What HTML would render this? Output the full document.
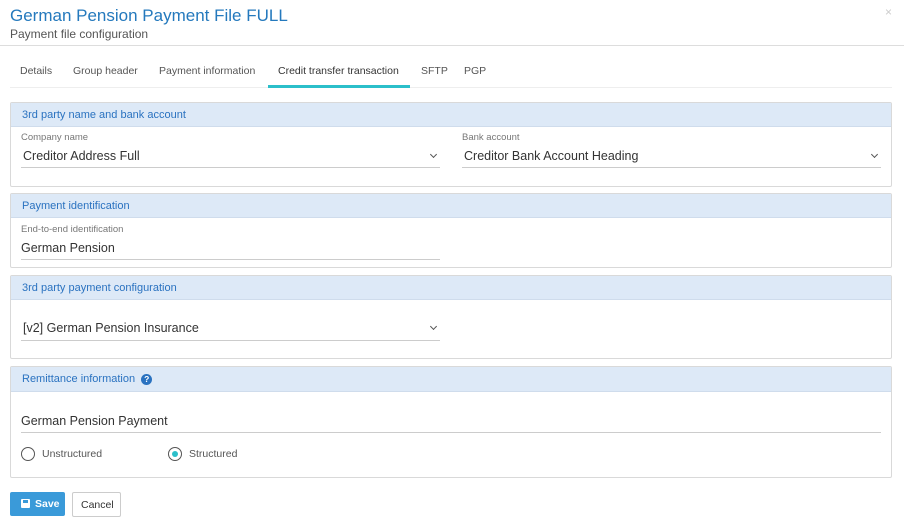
<!DOCTYPE html>
<html><head><meta charset="utf-8"><style>
*{margin:0;padding:0;box-sizing:border-box}
body{width:904px;height:528px;background:#fff;font-family:"Liberation Sans",sans-serif;position:relative;overflow:hidden;color:#333}
.a{position:absolute;white-space:nowrap}
.title{left:10px;top:6px;font-size:17px;color:#2479bd}
.sub{left:10px;top:27px;font-size:12px;color:#555}
.hl{position:absolute;left:0;width:904px;top:45px;height:1px;background:#ddd}
.tab{top:65px;font-size:10.5px;color:#555}
.panel{position:absolute;left:10px;width:882px;border:1px solid #d9d9d9;border-radius:2px}
.ph{height:24px;background:#dde9f7;border-bottom:1px solid #cfdcec;font-size:11px;color:#2a72c0;padding:6px 0 0 11px}
.lbl{font-size:9.5px;color:#777}
.val{font-size:12.5px;color:#333}
.ul{position:absolute;height:1px;background:#ccc}
.chev{position:absolute;width:5px;height:5px;border-right:1.3px solid #555;border-bottom:1.3px solid #555;transform:rotate(45deg)}
.radio{position:absolute;width:14px;height:14px;border:1.5px solid #555;border-radius:50%}
</style></head><body>
<div class="a title">German Pension Payment File FULL</div>
<div class="a sub">Payment file configuration</div>
<div class="a" style="left:885px;top:5px;color:#ccc;font-size:12px">×</div>
<div class="hl"></div>
<div class="a tab" style="left:20px">Details</div>
<div class="a tab" style="left:73px">Group header</div>
<div class="a tab" style="left:159px">Payment information</div>
<div class="a tab" style="left:278px;color:#333">Credit transfer transaction</div>
<div class="a tab" style="left:421px">SFTP</div>
<div class="a tab" style="left:464px">PGP</div>
<div class="a" style="left:10px;top:87px;width:882px;height:1px;background:#eee"></div>
<div class="a" style="left:268px;top:85px;width:142px;height:3px;background:#2bbfca"></div>

<div class="panel" style="top:102px;height:85px"><div class="ph">3rd party name and bank account</div></div>
<div class="a lbl" style="left:21px;top:132px">Company name</div>
<div class="a val" style="left:23px;top:149px">Creditor Address Full</div>
<div class="chev" style="left:431px;top:152px"></div>
<div class="ul" style="left:21px;top:167px;width:419px"></div>
<div class="a lbl" style="left:462px;top:132px">Bank account</div>
<div class="a val" style="left:464px;top:149px">Creditor Bank Account Heading</div>
<div class="chev" style="left:872px;top:152px"></div>
<div class="ul" style="left:462px;top:167px;width:419px"></div>

<div class="panel" style="top:193px;height:75px"><div class="ph">Payment identification</div></div>
<div class="a lbl" style="left:21px;top:224px">End-to-end identification</div>
<div class="a val" style="left:21px;top:241px">German Pension</div>
<div class="ul" style="left:21px;top:259px;width:419px"></div>

<div class="panel" style="top:275px;height:84px"><div class="ph">3rd party payment configuration</div></div>
<div class="a val" style="left:23px;top:321px">[v2] German Pension Insurance</div>
<div class="chev" style="left:431px;top:324px"></div>
<div class="ul" style="left:21px;top:340px;width:419px"></div>

<div class="panel" style="top:366px;height:112px"><div class="ph" style="height:25px;padding-top:6px">Remittance information <span style="display:inline-block;width:11px;height:11px;border-radius:50%;background:#2a72c0;color:#fff;font-size:8.5px;font-weight:bold;text-align:center;line-height:11px;vertical-align:0px;margin-left:3px">?</span></div></div>
<div class="a val" style="left:21px;top:414px">German Pension Payment</div>
<div class="ul" style="left:21px;top:432px;width:860px"></div>
<div class="radio" style="left:21px;top:447px"></div>
<div class="a" style="left:42px;top:448px;font-size:10.5px;color:#555">Unstructured</div>
<div class="radio" style="left:168px;top:447px"></div>
<div class="a" style="left:172px;top:451px;width:6px;height:6px;border-radius:50%;background:#2bbfca"></div>
<div class="a" style="left:189px;top:448px;font-size:10.5px;color:#555">Structured</div>

<div class="a" style="left:10px;top:492px;width:55px;height:24px;background:#3a9ad9;border-radius:2px;color:#fff;font-size:10.5px;font-weight:bold;padding:6px 0 0 11px"><span style="display:inline-block;width:9px;height:9px;background:#fff;border-radius:1px;vertical-align:-1px;margin-right:5px;position:relative"><span style="position:absolute;left:2px;top:1px;width:5px;height:3px;background:#3a9ad9"></span></span>Save</div>
<div class="a" style="left:72px;top:492px;width:49px;height:25px;border:1px solid #ccc;border-radius:2px;font-size:10.5px;color:#333;padding:6px 0 0 8px">Cancel</div>
</body></html>
